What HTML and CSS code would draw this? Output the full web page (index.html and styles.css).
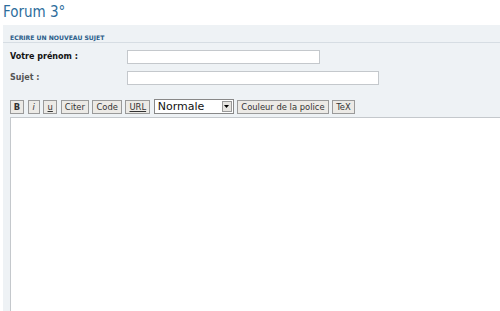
FILE: index.html
```html
<!DOCTYPE html>
<html>
<head>
<meta charset="utf-8">
<link rel="stylesheet" href="styles.css">
</head>
<body>
<h1 class="title">Forum 3°</h1>
<div class="panel">
  <div class="panel-head">ECRIRE UN NOUVEAU SUJET</div>
  <div class="form">
    <div class="row">
      <label class="label strong">Votre prénom :</label>
      <input class="field name" type="text">
    </div>
    <div class="row">
      <label class="label">Sujet :</label>
      <input class="field subject" type="text">
    </div>
    <div class="toolbar">
      <span class="btn b">B</span>
      <span class="btn i">i</span>
      <span class="btn u sq">u</span>
      <span class="btn">Citer</span>
      <span class="btn">Code</span>
      <span class="btn u">URL</span>
      <span class="select"><span class="sel-text">Normale</span><span class="arrow"><svg width="5" height="3" viewBox="0 0 5 3"><path d="M0 0H5L2.5 3Z" fill="#000"/></svg></span></span>
      <span class="btn">Couleur de la police</span>
      <span class="btn">TeX</span>
    </div>
    <div class="editor"></div>
  </div>
</div>
</body>
</html>
```
FILE: styles.css
```css
html, body { margin: 0; padding: 0; background: #fff; overflow: hidden; }
body { font-family: "DejaVu Sans", Verdana, sans-serif; width: 500px; height: 311px; }
.title {
  margin: 0;
  padding: 4px 0 0 3px;
  height: 21px;
  font-family: "DejaVu Sans Condensed", "DejaVu Sans", sans-serif;
  font-size: 15px;
  font-weight: normal;
  color: #2c6d9c;
  line-height: 17px;
}
.panel {
  margin-left: 3px;
  background: #eef2f5;
  height: 286px;
  display: flex;
  flex-direction: column;
}
.panel-head {
  font-size: 6.1px;
  font-weight: bold;
  color: #2a5d8a;
  padding: 8px 0 0 7px;
  height: 9px;
  line-height: 9px;
  border-bottom: 1px solid #d6dde3;
}
.form { padding: 6px 0 0 7px; display: flex; flex-direction: column; flex: 1; }
.row { display: flex; align-items: center; height: 15px; margin-bottom: 6px; }
.label { width: 117px; font-size: 8px; font-weight: bold; color: #555; }
.label.strong { color: #111; }
.field {
  box-sizing: border-box;
  height: 14px;
  margin: 0;
  padding: 0;
  border: 1px solid #c4c8cc;
  background: #fff;
}
.name { width: 193px; }
.subject { width: 252px; }
.toolbar { display: flex; align-items: center; gap: 3.6px; margin-top: 8px; height: 15px; }
.btn {
  box-sizing: border-box;
  height: 14px;
  padding: 0 3px;
  border: 1px solid #9a9a9a;
  background: #eceae6;
  font-size: 8.4px;
  line-height: 12px;
  color: #333;
}
.btn.b { font-weight: bold; width: 14px; text-align: center; padding: 0; }
.btn.i { font-style: italic; width: 12px; text-align: center; padding: 0; }
.btn.u { text-decoration: underline; }
.btn.sq { width: 14px; text-align: center; padding: 0; }
.select {
  box-sizing: border-box;
  width: 80px;
  height: 15px;
  border: 1px solid #888;
  background: #fff;
  display: flex;
  align-items: center;
  justify-content: space-between;
}
.sel-text { font-size: 11px; padding-left: 3px; color: #111; line-height: 13px; }
.arrow {
  box-sizing: border-box;
  width: 10px;
  height: 11px;
  margin-right: 1px;
  border: 1px solid #999;
  background: #e6e4e0;
  display: flex;
  align-items: center;
  justify-content: center;
}
.editor {
  margin-top: 3px;
  flex: 1;
  background: #fff;
  border: 1px solid #c4c8cc;
  border-right: none;
  border-bottom: none;
}
```
